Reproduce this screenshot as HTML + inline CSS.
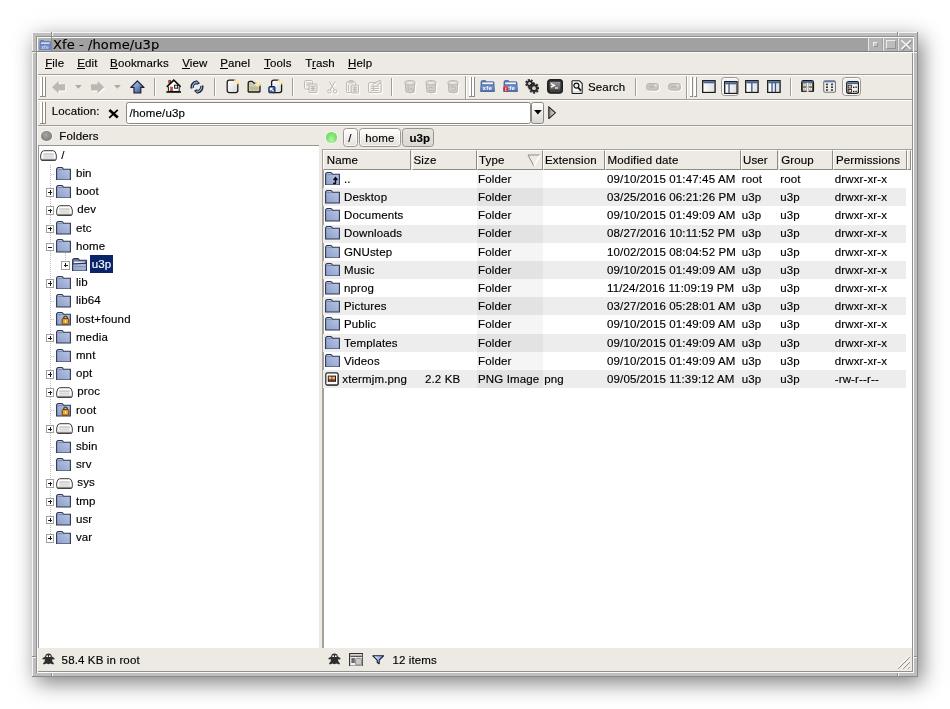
<!DOCTYPE html>
<html><head><meta charset="utf-8"><title>Xfe - /home/u3p</title>
<style>
html,body{margin:0;padding:0;background:#fff;}
body{width:950px;height:709px;position:relative;overflow:hidden;font-family:"Liberation Sans",sans-serif;font-size:11.5px;letter-spacing:.14px;color:#000;-webkit-text-stroke:.15px;}
.a{position:absolute;}
.txt{white-space:pre;line-height:14.34px;height:14.34px;}
u{text-decoration:underline;text-decoration-thickness:1px;text-underline-offset:1.2px;}
.vs{width:1px;background:#a19d96;border-right:1px solid #fff;}
.grip{width:2px;height:19px;background:#fff;border-right:.8px solid #8e8a84;border-bottom:.8px solid #8e8a84;}
.hd{box-sizing:border-box;border-top:1px solid #fff;border-left:1px solid #fff;border-right:1px solid #8e8a84;border-bottom:1px solid #8e8a84;background:#edeae4;}
.pb{top:128.3px;height:19px;box-sizing:border-box;border:1px solid #9b9892;border-radius:3.5px;background:linear-gradient(#ffffff,#f4f2ee 45%,#e3e0da);box-shadow:inset 0 0 0 1px rgba(255,255,255,.7);}
#root{left:0;top:0;width:950px;height:709px;will-change:transform;}
</style></head><body><div id="root" class="a">

<div class="a" style="left:32.00px;top:32.00px;width:886.00px;height:645.00px;background:#8a8a8a;box-shadow:4px 6px 20px 0 rgba(0,0,0,.5)"></div>
<div class="a" style="left:32.00px;top:32.00px;width:885.00px;height:644.00px;background:#f4f4f4;"></div>
<div class="a" style="left:33.00px;top:33.00px;width:884.00px;height:643.00px;background:#bebebe;"></div>
<div class="a" style="left:36.00px;top:36.00px;width:878.00px;height:637.00px;background:#909090;"></div>
<div class="a" style="left:37.00px;top:37.00px;width:877.00px;height:636.00px;background:#fafafa;"></div>
<div class="a" style="left:38.00px;top:38.00px;width:875.00px;height:634.00px;background:#909090;"></div>
<div class="a" style="left:38.00px;top:38.00px;width:874.00px;height:633.00px;background:#a1a1a1;"></div>
<div class="a" style="left:51.00px;top:32.00px;width:1.00px;height:4.00px;background:#8c8c8c;"></div>
<div class="a" style="left:52.00px;top:33.00px;width:1.00px;height:3.00px;background:#f2f2f2;"></div>
<div class="a" style="left:51.00px;top:673.00px;width:1.00px;height:4.00px;background:#8c8c8c;"></div>
<div class="a" style="left:52.00px;top:673.00px;width:1.00px;height:3.00px;background:#f2f2f2;"></div>
<div class="a" style="left:897.00px;top:32.00px;width:1.00px;height:4.00px;background:#8c8c8c;"></div>
<div class="a" style="left:898.00px;top:33.00px;width:1.00px;height:3.00px;background:#f2f2f2;"></div>
<div class="a" style="left:897.00px;top:673.00px;width:1.00px;height:4.00px;background:#8c8c8c;"></div>
<div class="a" style="left:898.00px;top:673.00px;width:1.00px;height:3.00px;background:#f2f2f2;"></div>
<div class="a" style="left:32.00px;top:51.00px;width:4.00px;height:1.00px;background:#8c8c8c;"></div>
<div class="a" style="left:33.00px;top:52.00px;width:3.00px;height:1.00px;background:#f2f2f2;"></div>
<div class="a" style="left:914.00px;top:51.00px;width:4.00px;height:1.00px;background:#8c8c8c;"></div>
<div class="a" style="left:914.00px;top:52.00px;width:3.00px;height:1.00px;background:#f2f2f2;"></div>
<div class="a" style="left:32.00px;top:656.00px;width:4.00px;height:1.00px;background:#8c8c8c;"></div>
<div class="a" style="left:33.00px;top:657.00px;width:3.00px;height:1.00px;background:#f2f2f2;"></div>
<div class="a" style="left:914.00px;top:656.00px;width:4.00px;height:1.00px;background:#8c8c8c;"></div>
<div class="a" style="left:914.00px;top:657.00px;width:3.00px;height:1.00px;background:#f2f2f2;"></div>
<div class="a" style="left:38.00px;top:38.00px;width:13.00px;height:13.00px;background:#b2b2b2;"></div>
<div class="a" style="left:51.00px;top:36.00px;width:1.00px;height:15.00px;background:#8c8c8c;"></div>
<svg class="a" style="left:38.8px;top:39.8px" width="13" height="10.4" viewBox="0 0 13 10.4"><path d="M1,9.6 V1.5 Q1,.5 2,.5 H4.4 L5.4,1.5 H10.6 Q11.4,1.5 11.4,2.4 V9.6 Z" fill="#6483c0" stroke="#5776b6" stroke-width=".8"/><rect x="2" y="2.4" width="8.6" height="1.5" fill="#dfe6f5"/><path d="M.4,9.8 L.9,4.6 H12 L12.5,9.8 Z" fill="#6a88c4"/><text x="2.2" y="8.8" font-family="Liberation Sans,sans-serif" font-size="5" font-weight="bold" fill="#cfdaf2">xfe</text></svg>
<div class="a" style="left:53px;top:36.6px;font-family:'DejaVu Sans',sans-serif;font-size:13px;line-height:16px;white-space:pre;letter-spacing:.1px">Xfe - /home/u3p</div>
<div class="a" style="left:867.60px;top:38.00px;width:14.60px;height:13.00px;background:#b4b4b4;box-sizing:border-box;border-left:1px solid #e4e4e4"></div>
<div class="a" style="left:882.90px;top:38.00px;width:14.60px;height:13.00px;background:#b4b4b4;box-sizing:border-box;border-left:1px solid #e4e4e4"></div>
<div class="a" style="left:898.20px;top:38.00px;width:14.60px;height:13.00px;background:#b4b4b4;box-sizing:border-box;border-left:1px solid #e4e4e4"></div>
<div class="a" style="left:872.8px;top:42.4px;width:4.8px;height:4.8px;box-sizing:border-box;border:1px solid #f0f0f0;border-right-color:#949494;border-bottom-color:#949494;background:#c6c6c6"></div>
<div class="a" style="left:885.8px;top:39.6px;width:10.2px;height:9.8px;box-sizing:border-box;border:1.3px solid #ececec;border-right-color:#929292;border-bottom-color:#929292;background:#bcbcbc"></div>
<svg class="a" style="left:899.6px;top:38.6px" width="13" height="12.4" viewBox="0 0 13 12.4"><path d="M2.2,2.2 L11.6,11 M11.6,2.2 L2.2,11" stroke="#8e8e8e" stroke-width="2"/><path d="M1.4,1.4 L10.8,10.2 M10.8,1.4 L1.4,10.2" stroke="#f2f2f2" stroke-width="1.7"/></svg>
<div class="a" style="left:37.00px;top:51.00px;width:876.00px;height:1.00px;background:#808080;"></div>
<div class="a" style="left:37.00px;top:52.00px;width:876.00px;height:1.00px;background:#fcfcfc;"></div>
<div class="a" style="left:38.00px;top:53.00px;width:874.00px;height:618.00px;background:#edeae4;"></div>
<div class="a txt" style="left:45.20px;top:56.00px;">File</div>
<div class="a" style="left:45.20px;top:68.00px;width:7.00px;height:1.00px;background:#000;"></div>
<div class="a txt" style="left:77.20px;top:56.00px;">Edit</div>
<div class="a" style="left:77.20px;top:68.00px;width:7.70px;height:1.00px;background:#000;"></div>
<div class="a txt" style="left:110.10px;top:56.00px;">Bookmarks</div>
<div class="a" style="left:110.10px;top:68.00px;width:7.70px;height:1.00px;background:#000;"></div>
<div class="a txt" style="left:182.20px;top:56.00px;">View</div>
<div class="a" style="left:182.20px;top:68.00px;width:7.50px;height:1.00px;background:#000;"></div>
<div class="a txt" style="left:220.20px;top:56.00px;">Panel</div>
<div class="a" style="left:220.20px;top:68.00px;width:7.70px;height:1.00px;background:#000;"></div>
<div class="a txt" style="left:264.10px;top:56.00px;">Tools</div>
<div class="a" style="left:264.10px;top:68.00px;width:5.80px;height:1.00px;background:#000;"></div>
<div class="a txt" style="left:305.20px;top:56.00px;">Trash</div>
<div class="a" style="left:311.90px;top:68.00px;width:3.90px;height:1.00px;background:#000;"></div>
<div class="a txt" style="left:348.10px;top:56.00px;">Help</div>
<div class="a" style="left:348.10px;top:68.00px;width:8.30px;height:1.00px;background:#000;"></div>
<div class="a" style="left:38.00px;top:74.00px;width:874.00px;height:1.00px;background:#a19d96;"></div>
<div class="a" style="left:38.00px;top:75.00px;width:874.00px;height:1.00px;background:#fff;"></div>
<div class="a" style="left:38.00px;top:99.00px;width:874.00px;height:1.00px;background:#a19d96;"></div>
<div class="a" style="left:38.00px;top:100.00px;width:874.00px;height:1.00px;background:#fff;"></div>
<div class="a" style="left:38.00px;top:125.00px;width:874.00px;height:1.00px;background:#a19d96;"></div>
<div class="a" style="left:38.00px;top:126.00px;width:874.00px;height:1.00px;background:#f6f5f2;"></div>
<div class="a" style="left:465.00px;top:76.00px;width:1.00px;height:23.00px;background:#a19d96;"></div>
<div class="a" style="left:466.00px;top:76.00px;width:1.00px;height:23.00px;background:#fff;"></div>
<div class="a" style="left:686.00px;top:76.00px;width:1.00px;height:23.00px;background:#a19d96;"></div>
<div class="a" style="left:687.00px;top:76.00px;width:1.00px;height:23.00px;background:#fff;"></div>
<div class="a grip" style="left:40.2px;top:77px"></div>
<div class="a grip" style="left:43.2px;top:77px"></div>
<div class="a grip" style="left:469.0px;top:77px"></div>
<div class="a grip" style="left:472.3px;top:77px"></div>
<div class="a grip" style="left:690.3px;top:77px"></div>
<div class="a grip" style="left:693.8px;top:77px"></div>
<div class="a grip" style="left:40.2px;top:101.8px;height:21.2px"></div>
<div class="a grip" style="left:43.2px;top:101.8px;height:21.2px"></div>
<div class="a vs" style="left:154.0px;top:78.2px;height:18px"></div>
<div class="a vs" style="left:213.8px;top:78.2px;height:18px"></div>
<div class="a vs" style="left:292.0px;top:78.2px;height:18px"></div>
<div class="a vs" style="left:391.0px;top:78.2px;height:18px"></div>
<div class="a vs" style="left:635.0px;top:78.2px;height:18px"></div>
<div class="a vs" style="left:790.0px;top:78.2px;height:18px"></div>
<svg class="a" style="left:52.00px;top:81.00px" width="14.9" height="14.1" viewBox="0 0 14.9 14.1"><path d="M0,6.3 L6.6,0 L6.6,3.2 L13.2,3.2 L13.2,9.4 L6.6,9.4 L6.6,12.6 Z" transform="translate(1,1)" fill="#fff"/><path d="M0,6.3 L6.6,0 L6.6,3.2 L13.2,3.2 L13.2,9.4 L6.6,9.4 L6.6,12.6 Z" fill="#bcb8b1"/></svg>
<svg class="a" style="left:90.80px;top:81.00px" width="14.9" height="14.1" viewBox="0 0 14.9 14.1"><path d="M13.2,6.3 L6.6,0 L6.6,3.2 L0,3.2 L0,9.4 L6.6,9.4 L6.6,12.6 Z" transform="translate(1,1)" fill="#fff"/><path d="M13.2,6.3 L6.6,0 L6.6,3.2 L0,3.2 L0,9.4 L6.6,9.4 L6.6,12.6 Z" fill="#bcb8b1"/></svg>
<svg class="a" style="left:74.70px;top:85.30px" width="7" height="4" viewBox="0 0 7 4"><path d="M0,0 H6.8 L3.4,3.8 Z" fill="#aeaaa3"/></svg>
<svg class="a" style="left:113.60px;top:85.30px" width="7" height="4" viewBox="0 0 7 4"><path d="M0,0 H6.8 L3.4,3.8 Z" fill="#aeaaa3"/></svg>
<svg class="a" style="left:129.50px;top:79.50px" width="15" height="14" viewBox="0 0 15 14"><defs><linearGradient id="ug" x1="0" y1="0" x2="1" y2="1"><stop offset="0" stop-color="#b9cbec"/><stop offset=".45" stop-color="#7e98c8"/><stop offset="1" stop-color="#2f4674"/></linearGradient></defs><path d="M7.4,0.8 L14,7.4 L10.8,7.4 L10.8,13 L4,13 L4,7.4 L0.8,7.4 Z" fill="url(#ug)" stroke="#18223c" stroke-width="1.2" stroke-linejoin="round"/></svg>
<svg class="a" style="left:165.60px;top:79.40px" width="15.6" height="14" viewBox="0 0 15.6 14"><rect x="2.8" y="1.2" width="2" height="3" fill="#d8402c" stroke="#3a1410" stroke-width=".5"/><path d="M2.4,7 V12.4 H13.2 V7" fill="#fff" stroke="#111" stroke-width="1"/><path d="M0.8,7.8 L7.8,1.2 L14.8,7.8" fill="#fff" stroke="#0a0a0a" stroke-width="1.6" stroke-linejoin="miter"/><path d="M3.2,7.4 L7.8,3.2 L12.4,7.4 Z" fill="#fff"/><rect x="4.6" y="8" width="1.9" height="4" fill="#e2402e" stroke="#5a1a12" stroke-width=".4"/><rect x="8.6" y="6.2" width="3" height="3" fill="#f4f4f4" stroke="#1a1a1a" stroke-width="1"/><path d="M0.4,13 H15.2" stroke="#0a0a0a" stroke-width="1.6"/></svg>
<svg class="a" style="left:189.80px;top:80.00px" width="14" height="14" viewBox="0 0 14 14"><path d="M2.36,8.24 A4.8,4.8 0 0 1 6.58,2.22" stroke="#141c34" stroke-width="3.4" fill="none"/><path d="M6.3,-0.2 L10,3.2 L6.7,5 Z" fill="#141c34"/><path d="M2.5,7.9 A4.7,4.7 0 0 1 6.9,2.3" stroke="#8ca6d6" stroke-width="1.4" fill="none"/><path d="M6.9,1.3 L8.7,3.1 L6.9,3.7 Z" fill="#6a86bc"/><g transform="rotate(180 7 7)"><path d="M2.36,8.24 A4.8,4.8 0 0 1 6.58,2.22" stroke="#141c34" stroke-width="3.4" fill="none"/><path d="M6.3,-0.2 L10,3.2 L6.7,5 Z" fill="#141c34"/><path d="M2.5,7.9 A4.7,4.7 0 0 1 6.9,2.3" stroke="#8ca6d6" stroke-width="1.4" fill="none"/><path d="M6.9,1.3 L8.7,3.1 L6.9,3.7 Z" fill="#6a86bc"/></g></svg>
<svg class="a" style="left:226.40px;top:79.20px" width="14" height="14.6" viewBox="0 0 14 14.6"><defs><linearGradient id="dg1" x1="0" y1="0" x2="1" y2="1"><stop offset="0" stop-color="#fff"/><stop offset="1" stop-color="#d8d8d8"/></linearGradient></defs><rect x="1.2" y="1.2" width="10.6" height="12.4" rx="2" fill="url(#dg1)" stroke="#1a1a1a" stroke-width="1.3"/><circle cx="10.8" cy="2.6" r="3" fill="#fff6d8" opacity=".75"/><circle cx="10.8" cy="2.6" r="1.9" fill="#f8d888"/><circle cx="10.8" cy="2.6" r="1" fill="#fffdf2"/></svg>
<svg class="a" style="left:247.20px;top:80.00px" width="15" height="13" viewBox="0 0 15 13"><path d="M1.2,11.6 V3.4 Q1.2,1.4 3,1.4 H5.2 L7,3.2 H11.6 Q13,3.2 13,4.8 V11.6 Q13,12 12.4,12 H1.8 Q1.2,12 1.2,11.6 Z" fill="#cfcdb0" stroke="#1a1a1a" stroke-width="1.3"/><rect x="3" y="6.6" width="8.4" height="3.6" fill="#bdbb98"/><circle cx="11.2" cy="3.4" r="3" fill="#fff6d8" opacity=".75"/><circle cx="11.2" cy="3.4" r="1.9" fill="#f8d888"/><circle cx="11.2" cy="3.4" r="1" fill="#fffdf2"/></svg>
<svg class="a" style="left:268.20px;top:79.20px" width="15" height="14.6" viewBox="0 0 15 14.6"><rect x="3.6" y="1.2" width="10" height="12.4" rx="2" fill="url(#dg1)" stroke="#1a1a1a" stroke-width="1.3"/><circle cx="12.6" cy="2.6" r="3" fill="#fff6d8" opacity=".75"/><circle cx="12.6" cy="2.6" r="1.9" fill="#f8d888"/><circle cx="12.6" cy="2.6" r="1" fill="#fffdf2"/><rect x="0.8" y="7.6" width="6.2" height="6.2" rx=".8" fill="#3e64a8" stroke="#122040" stroke-width="1"/><path d="M5.6,12.4 L2.6,9.4 M2.4,11.6 V9.2 H4.8" stroke="#fff" stroke-width="1.1" fill="none"/></svg>
<svg class="a" style="left:304.00px;top:80.30px" width="15.1" height="14.7" viewBox="0 0 15.1 14.7"><g transform="translate(1,1)" fill="none" stroke="#fff" stroke-width="1.1"><rect x=".6" y=".6" width="7.8" height="8.6" rx="1"/><path d="M2.2,3 H6.8 M2.2,5 H6.8"/><rect x="5" y="4" width="8" height="8.6" rx="1" fill="#edeae4"/><path d="M6.6,6.4 H11.4 M6.6,8.4 H11.4 M6.6,10.4 H11.4 M9,6.4 V10.4"/></g><g fill="none" stroke="#bab6af" stroke-width="1"><rect x=".6" y=".6" width="7.8" height="8.6" rx="1"/><path d="M2.2,3 H6.8 M2.2,5 H6.8"/><rect x="5" y="4" width="8" height="8.6" rx="1" fill="#edeae4"/><path d="M6.6,6.4 H11.4 M6.6,8.4 H11.4 M6.6,10.4 H11.4 M9,6.4 V10.4"/></g></svg>
<svg class="a" style="left:326.60px;top:80.60px" width="12.1" height="14.1" viewBox="0 0 12.1 14.1"><g transform="translate(1,1)" fill="none" stroke="#fff" stroke-width="1.1"><path d="M2.4,0.6 L7.4,9 M8.2,0.6 L3.2,9"/><circle cx="2.4" cy="10.4" r="1.7"/><circle cx="8.2" cy="10.4" r="1.7"/></g><g fill="none" stroke="#bab6af" stroke-width="1"><path d="M2.4,0.6 L7.4,9 M8.2,0.6 L3.2,9"/><circle cx="2.4" cy="10.4" r="1.7"/><circle cx="8.2" cy="10.4" r="1.7"/></g></svg>
<svg class="a" style="left:346.40px;top:80.00px" width="14.9" height="14.9" viewBox="0 0 14.9 14.9"><g transform="translate(1,1)" fill="none" stroke="#fff" stroke-width="1.1"><rect x=".6" y="1.8" width="9" height="10.8" rx="1.2"/><rect x="3" y=".6" width="4.4" height="2.4" rx=".8"/><rect x="5.2" y="5" width="7.4" height="8" rx=".8" fill="#edeae4"/><path d="M6.8,7.2 H11 M6.8,9.2 H11 M6.8,11.2 H11 M8.8,7.2 V11.2 M2.6,4.6 V11"/></g><g fill="none" stroke="#bab6af" stroke-width="1"><rect x=".6" y="1.8" width="9" height="10.8" rx="1.2"/><rect x="3" y=".6" width="4.4" height="2.4" rx=".8"/><rect x="5.2" y="5" width="7.4" height="8" rx=".8" fill="#edeae4"/><path d="M6.8,7.2 H11 M6.8,9.2 H11 M6.8,11.2 H11 M8.8,7.2 V11.2 M2.6,4.6 V11"/></g></svg>
<svg class="a" style="left:368.00px;top:80.20px" width="15.9" height="14.7" viewBox="0 0 15.9 14.7"><g transform="translate(1,1)" fill="none" stroke="#fff" stroke-width="1.1"><rect x=".6" y="2.6" width="12.6" height="10" rx="1.4"/><path d="M3,6.2 H11 M3,8.4 H11 M3,10.6 H11 M5.6,6.2 V10.6"/><path d="M4.4,4.6 L11,0.8 L13,0.8 L13,2.6 L9.4,4.8" fill="#edeae4"/></g><g fill="none" stroke="#bab6af" stroke-width="1"><rect x=".6" y="2.6" width="12.6" height="10" rx="1.4"/><path d="M3,6.2 H11 M3,8.4 H11 M3,10.6 H11 M5.6,6.2 V10.6"/><path d="M4.4,4.6 L11,0.8 L13,0.8 L13,2.6 L9.4,4.8" fill="#edeae4"/></g></svg>
<svg class="a" style="left:404.00px;top:79.80px" width="13.5" height="14.7" viewBox="0 0 13.5 14.7"><g transform="translate(1,1)" fill="none" stroke="#fff" stroke-width="1.1"><path d="M1.2,3.4 L2,12 Q6,13.8 10,12 L10.8,3.4 Z" fill="#d3d0c9"/><ellipse cx="6" cy="2.8" rx="5.2" ry="2.2" fill="#dedbd5"/><ellipse cx="6" cy="2.8" rx="2.6" ry=".9" fill="#edeae4" stroke="none"/><path d="M4.2,6.4 V11 M6.2,8.8 H8.2 V11"/></g><g fill="none" stroke="#bab6af" stroke-width="1"><path d="M1.2,3.4 L2,12 Q6,13.8 10,12 L10.8,3.4 Z" fill="#d3d0c9"/><ellipse cx="6" cy="2.8" rx="5.2" ry="2.2" fill="#dedbd5"/><ellipse cx="6" cy="2.8" rx="2.6" ry=".9" fill="#edeae4" stroke="none"/><path d="M4.2,6.4 V11 M6.2,8.8 H8.2 V11"/></g></svg>
<svg class="a" style="left:425.20px;top:79.80px" width="13.5" height="14.7" viewBox="0 0 13.5 14.7"><g transform="translate(1,1)" fill="none" stroke="#fff" stroke-width="1.1"><path d="M1.2,3.4 L2,12 Q6,13.8 10,12 L10.8,3.4 Z" fill="#d3d0c9"/><ellipse cx="6" cy="2.8" rx="5.2" ry="2.2" fill="#dedbd5"/><ellipse cx="6" cy="2.8" rx="2.6" ry=".9" fill="#edeae4" stroke="none"/><path d="M3.6,8.2 Q6,6.6 8.4,8.2 M3.8,10.6 H8.2 M6,0.2 V1.6"/></g><g fill="none" stroke="#bab6af" stroke-width="1"><path d="M1.2,3.4 L2,12 Q6,13.8 10,12 L10.8,3.4 Z" fill="#d3d0c9"/><ellipse cx="6" cy="2.8" rx="5.2" ry="2.2" fill="#dedbd5"/><ellipse cx="6" cy="2.8" rx="2.6" ry=".9" fill="#edeae4" stroke="none"/><path d="M3.6,8.2 Q6,6.6 8.4,8.2 M3.8,10.6 H8.2 M6,0.2 V1.6"/></g></svg>
<svg class="a" style="left:447.00px;top:79.80px" width="13.5" height="14.7" viewBox="0 0 13.5 14.7"><g transform="translate(1,1)" fill="none" stroke="#fff" stroke-width="1.1"><path d="M1.2,3.4 L2,12 Q6,13.8 10,12 L10.8,3.4 Z" fill="#d3d0c9"/><ellipse cx="6" cy="2.8" rx="5.2" ry="2.2" fill="#dedbd5"/><ellipse cx="6" cy="2.8" rx="2.6" ry=".9" fill="#edeae4" stroke="none"/><path d="M3.4,7 H8 Q9.4,8.6 8,10.4 H4 M6,0.2 V1.6"/></g><g fill="none" stroke="#bab6af" stroke-width="1"><path d="M1.2,3.4 L2,12 Q6,13.8 10,12 L10.8,3.4 Z" fill="#d3d0c9"/><ellipse cx="6" cy="2.8" rx="5.2" ry="2.2" fill="#dedbd5"/><ellipse cx="6" cy="2.8" rx="2.6" ry=".9" fill="#edeae4" stroke="none"/><path d="M3.4,7 H8 Q9.4,8.6 8,10.4 H4 M6,0.2 V1.6"/></g></svg>
<svg class="a" style="left:480.20px;top:79.90px" width="15" height="12.2" viewBox="0 0 15 12.2"><defs><linearGradient id="xg" x1="0" y1="0" x2="0" y2="1"><stop offset="0" stop-color="#7f9bd0"/><stop offset="1" stop-color="#4c6caa"/></linearGradient></defs><path d="M1,11.4 V2 Q1,0.6 2.4,0.6 H5.4 L6.6,1.8 H13 Q14,1.8 14,2.8 V11.4 Z" fill="#5573ae" stroke="#4a66a0" stroke-width=".8"/><rect x="2.2" y="2.4" width="10.8" height="1.9" fill="#f2f5fc"/><path d="M0.4,11.6 L1.2,5.2 H13.8 L14.6,11.6 Z" fill="url(#xg)" stroke="#4866a2" stroke-width=".6"/><text x="2.6" y="10.4" font-family="Liberation Sans,sans-serif" font-size="6.2" font-weight="bold" fill="#fff">xfe</text></svg>
<svg class="a" style="left:502.60px;top:79.90px" width="15" height="12.2" viewBox="0 0 15 12.2"><defs><linearGradient id="xg" x1="0" y1="0" x2="0" y2="1"><stop offset="0" stop-color="#7f9bd0"/><stop offset="1" stop-color="#4c6caa"/></linearGradient></defs><path d="M1,11.4 V2 Q1,0.6 2.4,0.6 H5.4 L6.6,1.8 H13 Q14,1.8 14,2.8 V11.4 Z" fill="#5573ae" stroke="#4a66a0" stroke-width=".8"/><rect x="2.2" y="2.4" width="10.8" height="1.9" fill="#f2f5fc"/><path d="M0.4,11.6 L1.2,5.2 H13.8 L14.6,11.6 Z" fill="url(#xg)" stroke="#4866a2" stroke-width=".6"/><text x="2.6" y="10.4" font-family="Liberation Sans,sans-serif" font-size="6.2" font-weight="bold" fill="#fff">xfe</text><circle cx="2.8" cy="9" r="2.5" fill="#ee1c1c"/><rect x="2.3" y="7.4" width="1" height="2.2" fill="#fff"/><rect x="2.3" y="10" width="1" height=".9" fill="#fff"/></svg>
<svg class="a" style="left:524.60px;top:79.40px" width="14.6" height="14.6" viewBox="0 0 14.6 14.6"><polygon points="8.72,3.57 8.71,5.29 7.45,5.12 6.92,6.21 7.82,7.10 6.47,8.16 5.81,7.08 4.63,7.34 4.50,8.60 2.82,8.20 3.26,7.02 2.32,6.26 1.25,6.94 0.52,5.38 1.72,4.98 1.73,3.78 0.53,3.37 1.29,1.82 2.35,2.51 3.29,1.77 2.87,0.57 4.55,0.20 4.67,1.46 5.85,1.74 6.51,0.66 7.85,1.74 6.94,2.62 7.46,3.71" fill="#2a2a2a" stroke="#111" stroke-width=".5"/><circle cx="4.6" cy="4.4" r="1.512" fill="#d6d3cd"/><polygon points="14.10,8.17 14.13,10.04 12.57,9.90 12.10,11.11 13.33,12.07 12.04,13.42 11.03,12.22 9.83,12.74 10.03,14.30 8.16,14.33 8.30,12.77 7.09,12.30 6.13,13.53 4.78,12.24 5.98,11.23 5.46,10.03 3.90,10.23 3.87,8.36 5.43,8.50 5.90,7.29 4.67,6.33 5.96,4.98 6.97,6.18 8.17,5.66 7.97,4.10 9.84,4.07 9.70,5.63 10.91,6.10 11.87,4.87 13.22,6.16 12.02,7.17 12.54,8.37" fill="#2a2a2a" stroke="#111" stroke-width=".5"/><circle cx="9" cy="9.2" r="1.872" fill="#d6d3cd"/></svg>
<svg class="a" style="left:546.60px;top:79.40px" width="16.2" height="14.8" viewBox="0 0 16.2 14.8"><defs><linearGradient id="tg" x1="0" y1="0" x2="0" y2="1"><stop offset="0" stop-color="#9a9a9a"/><stop offset="1" stop-color="#5a5a5a"/></linearGradient></defs><rect x=".6" y=".6" width="15" height="13.6" rx="2.6" fill="#2c2c2c" stroke="#161616" stroke-width="1"/><rect x="2.8" y="2.8" width="10.6" height="8" fill="url(#tg)"/><path d="M4,4.6 L7.4,6.4 L4,8.2" fill="none" stroke="#fff" stroke-width="1.3"/><path d="M8,9 H11" stroke="#fff" stroke-width="1.2"/><rect x="2.8" y="11.4" width="10.6" height="1.4" fill="#4a4a4a"/></svg>
<svg class="a" style="left:571.40px;top:79.80px" width="12" height="14.2" viewBox="0 0 12 14.2"><path d="M1,1.4 Q1,.7 1.7,.7 H8.4 L11.2,3.6 V12.8 Q11.2,13.5 10.5,13.5 H1.7 Q1,13.5 1,12.8 Z" fill="#fafafa" stroke="#1c1c1c" stroke-width="1.1"/><path d="M2,11 Q5,12.6 10.2,10.4 V12.6 H2 Z" fill="#c8c8c8"/><circle cx="5.4" cy="5.6" r="2.5" fill="#e8eef8" stroke="#111" stroke-width="1.2"/><path d="M7.2,7.6 L10,10.6" stroke="#111" stroke-width="1.8"/></svg>
<div class="a txt" style="left:588.00px;top:80.20px;">Search</div>
<svg class="a" style="left:646.40px;top:82.80px" width="14.5" height="9.1" viewBox="0 0 14.5 9.1"><g transform="translate(1,1)" fill="none" stroke="#fff" stroke-width="1.1"><rect x=".6" y=".6" width="11.8" height="6.4" rx="2.2" fill="#c9c6bf"/><path d="M3,3.8 H8" stroke-width="1.6"/><rect x="8.6" y="1.6" width="2" height="1.6" fill="#edeae4" stroke="none"/></g><g fill="none" stroke="#bab6af" stroke-width="1"><rect x=".6" y=".6" width="11.8" height="6.4" rx="2.2" fill="#c9c6bf"/><path d="M3,3.8 H8" stroke-width="1.6"/><rect x="8.6" y="1.6" width="2" height="1.6" fill="#edeae4" stroke="none"/></g></svg>
<svg class="a" style="left:668.20px;top:82.80px" width="14.5" height="9.1" viewBox="0 0 14.5 9.1"><g transform="translate(1,1)" fill="none" stroke="#fff" stroke-width="1.1"><rect x=".6" y=".6" width="11.8" height="6.4" rx="2.2" fill="#c9c6bf"/><path d="M3,3.8 H8" stroke-width="1.6"/><rect x="8.6" y="1.6" width="2" height="1.6" fill="#edeae4" stroke="none"/></g><g fill="none" stroke="#bab6af" stroke-width="1"><rect x=".6" y=".6" width="11.8" height="6.4" rx="2.2" fill="#c9c6bf"/><path d="M3,3.8 H8" stroke-width="1.6"/><rect x="8.6" y="1.6" width="2" height="1.6" fill="#edeae4" stroke="none"/></g></svg>
<div class="a" style="left:721.0px;top:77.2px;width:18.4px;height:18.6px;box-sizing:border-box;border:1px solid #9d9993;border-radius:3.5px;background:#f3f1ed;box-shadow:inset 0 0 0 1px #fbfaf8"></div>
<div class="a" style="left:842.3px;top:77.2px;width:18.4px;height:18.6px;box-sizing:border-box;border:1px solid #9d9993;border-radius:3.5px;background:#f3f1ed;box-shadow:inset 0 0 0 1px #fbfaf8"></div>
<svg class="a" style="left:701.80px;top:80.00px" width="13.8" height="13.2" viewBox="0 0 13.8 13.2"><defs><linearGradient id="pg" x1="0" y1="0" x2="1" y2="0"><stop offset="0" stop-color="#fff"/><stop offset="1" stop-color="#dedede"/></linearGradient></defs><rect x=".7" y=".7" width="12.4" height="11.8" fill="url(#pg)" stroke="#181818" stroke-width="1.3"/><rect x="1.3" y="1.3" width="11.2" height="2" fill="#45659a"/></svg>
<svg class="a" style="left:724.00px;top:80.80px" width="13.8" height="13.2" viewBox="0 0 13.8 13.2"><defs><linearGradient id="pg" x1="0" y1="0" x2="1" y2="0"><stop offset="0" stop-color="#fff"/><stop offset="1" stop-color="#dedede"/></linearGradient></defs><rect x=".7" y=".7" width="12.4" height="11.8" fill="url(#pg)" stroke="#181818" stroke-width="1.3"/><rect x="1.3" y="1.3" width="11.2" height="2" fill="#45659a"/><rect x="4.4" y="3" width="1.3" height="9" fill="#35558c"/></svg>
<svg class="a" style="left:745.00px;top:80.00px" width="13.8" height="13.2" viewBox="0 0 13.8 13.2"><defs><linearGradient id="pg" x1="0" y1="0" x2="1" y2="0"><stop offset="0" stop-color="#fff"/><stop offset="1" stop-color="#dedede"/></linearGradient></defs><rect x=".7" y=".7" width="12.4" height="11.8" fill="url(#pg)" stroke="#181818" stroke-width="1.3"/><rect x="1.3" y="1.3" width="11.2" height="2" fill="#45659a"/><rect x="6.2" y="3" width="1.3" height="9" fill="#35558c"/></svg>
<svg class="a" style="left:766.80px;top:80.00px" width="13.8" height="13.2" viewBox="0 0 13.8 13.2"><defs><linearGradient id="pg" x1="0" y1="0" x2="1" y2="0"><stop offset="0" stop-color="#fff"/><stop offset="1" stop-color="#dedede"/></linearGradient></defs><rect x=".7" y=".7" width="12.4" height="11.8" fill="url(#pg)" stroke="#181818" stroke-width="1.3"/><rect x="1.3" y="1.3" width="11.2" height="2" fill="#45659a"/><rect x="4.4" y="3" width="1.3" height="9" fill="#35558c"/><rect x="7.8" y="3" width="1.3" height="9" fill="#35558c"/></svg>
<svg class="a" style="left:801.40px;top:79.60px" width="13.2" height="12.8" viewBox="0 0 13.2 12.8"><rect x=".7" y=".7" width="11.8" height="11.4" rx="1.8" fill="#5a5a5a" stroke="#181818" stroke-width="1.2"/><rect x="1.4" y="1.2" width="10.4" height="1.6" fill="#5070a6"/><rect x="5.6" y="2.8" width="2" height="9" fill="#f2f2f2"/><rect x="2.2" y="3.4" width="3" height="2.6" fill="#e8e8e8"/><rect x="8" y="3.4" width="3" height="2.6" fill="#e8e8e8"/><rect x="2.2" y="8" width="3" height="2.6" fill="#e8e8e8"/><rect x="8" y="8" width="3" height="2.6" fill="#e8e8e8"/><rect x="3" y="4.2" width="1.4" height="1.2" fill="#e0a050"/><rect x="8.8" y="4.2" width="1.4" height="1.2" fill="#e0a050"/><rect x="3" y="8.8" width="1.4" height="1.2" fill="#e0a050"/><rect x="8.8" y="8.8" width="1.4" height="1.2" fill="#e0a050"/><path d="M2,7 H11" stroke="#bbb" stroke-width=".8"/></svg>
<svg class="a" style="left:823.20px;top:79.80px" width="13.2" height="13" viewBox="0 0 13.2 13"><rect x=".7" y=".7" width="11.8" height="11.6" rx="1.6" fill="#ececec" stroke="#7a7a7a" stroke-width="1.1"/><rect x="1.2" y=".8" width="10.8" height="1.5" fill="#5a7ab0"/><rect x="3.2" y="3.6" width="1.6" height="1.6" fill="#0a0a0a"/><rect x="3.2" y="6.4" width="1.6" height="1.6" fill="#0a0a0a"/><rect x="3.2" y="9.2" width="1.6" height="1.6" fill="#0a0a0a"/><rect x="8.2" y="3.6" width="1.6" height="1.6" fill="#0a0a0a"/><rect x="8.2" y="6.4" width="1.6" height="1.6" fill="#0a0a0a"/><rect x="8.2" y="9.2" width="1.6" height="1.6" fill="#0a0a0a"/></svg>
<svg class="a" style="left:845.60px;top:80.60px" width="13.2" height="13" viewBox="0 0 13.2 13"><rect x=".7" y=".7" width="11.8" height="11.6" rx="1.8" fill="#f2f2f2" stroke="#202020" stroke-width="1.3"/><rect x="1.3" y="1.3" width="10.6" height="1.8" fill="#45659a"/><rect x="2.2" y="4.2" width="3.2" height="2.8" fill="#fff" stroke="#222" stroke-width=".9"/><rect x="2.2" y="8.4" width="3.2" height="2.8" fill="#fff" stroke="#222" stroke-width=".9"/><rect x="3" y="5.2" width="1.4" height="1" fill="#e0a050"/><rect x="3" y="9.4" width="1.4" height="1" fill="#e0a050"/><rect x="7" y="5.6" width="1.4" height="1.3" fill="#111"/><rect x="9.4" y="5.6" width="1.4" height="1.3" fill="#111"/><rect x="7" y="9.8" width="1.4" height="1.3" fill="#111"/><rect x="9.4" y="9.8" width="1.4" height="1.3" fill="#111"/></svg>
<div class="a txt" style="left:51.70px;top:104.20px;">Location:</div>
<svg class="a" style="left:108.00px;top:108.80px" width="11.4" height="9.8" viewBox="0 0 11.4 9.8"><path d="M1.4,1 L9.8,8.6" stroke="#000" stroke-width="2.7"/><path d="M9.8,.8 L1.2,8.8" stroke="#000" stroke-width="1.7"/></svg>
<div class="a" style="left:125.6px;top:102.4px;width:405px;height:21.6px;box-sizing:border-box;border:1px solid #8b8882;border-radius:2.5px;background:#fff;box-shadow:0 1px 0 #fff"></div>
<div class="a txt" style="left:129.40px;top:105.70px;">/home/u3p</div>
<div class="a" style="left:531.4px;top:102.4px;width:12.6px;height:21.6px;box-sizing:border-box;border:1px solid #8b8882;border-radius:2.5px;background:linear-gradient(#fff,#efede9 50%,#d9d6d0);box-shadow:0 1px 0 #fff"></div>
<svg class="a" style="left:533.60px;top:110.00px" width="8" height="4.6" viewBox="0 0 8 4.6"><path d="M0,0 H7.8 L3.9,4.4 Z" fill="#000"/></svg>
<svg class="a" style="left:548.40px;top:105.60px" width="8.4" height="13.6" viewBox="0 0 8.4 13.6"><defs><linearGradient id="gg" x1="0" y1="0" x2="1" y2="0"><stop offset="0" stop-color="#8a8a8a"/><stop offset="1" stop-color="#e8e8e8"/></linearGradient></defs><path d="M.8,.9 L7.4,6.8 L.8,12.7 Z" fill="url(#gg)" stroke="#222" stroke-width="1.1" stroke-linejoin="miter"/></svg>
<div class="a" style="left:41px;top:130.8px;width:11.2px;height:10.6px;border-radius:50%;background:radial-gradient(circle at 45% 40%,#a8a8a8,#7e7e7e 70%,#6e6e6e);box-shadow:0 0 0 .6px #f8f8f8"></div>
<div class="a txt" style="left:59.30px;top:129.20px;">Folders</div>
<div class="a" style="left:325.8px;top:132.3px;width:11.4px;height:10.8px;border-radius:50%;background:radial-gradient(ellipse at 50% 75%,#b4f8a4,#7ee070 55%,#5fcf52);box-shadow:0 0 0 .7px #f4fbf2"></div>
<div class="a pb" style="left:342.5px;width:15.2px"></div>
<div class="a pb" style="left:359.4px;width:41.2px"></div>
<div class="a pb" style="left:402.4px;width:31.4px;background:linear-gradient(#e6e3dd,#dcd9d3);box-shadow:none;border-color:#97948e"></div>
<div class="a txt" style="left:348.20px;top:130.60px;">/</div>
<div class="a txt" style="left:365.20px;top:130.60px;">home</div>
<div class="a txt" style="left:409.40px;top:130.60px;font-weight:bold">u3p</div>
<div class="a" style="left:38px;top:145px;width:281.2px;height:502.6px;background:#98948f"></div>
<div class="a" style="left:39px;top:146px;width:280.2px;height:501.6px;background:#fff"></div>
<div class="a" style="left:49.6px;top:165px;width:1px;height:372.4px;background-image:repeating-linear-gradient(to bottom,#c2c2c2 0,#c2c2c2 1px,transparent 1px,transparent 2px)"></div>
<div class="a" style="left:65.2px;top:253.2px;width:1px;height:8px;background-image:repeating-linear-gradient(to bottom,#c2c2c2 0,#c2c2c2 1px,transparent 1px,transparent 2px)"></div>
<svg class="a" style="left:40.00px;top:150.00px" width="17" height="11" viewBox="0 0 17 11"><defs><linearGradient id="dg" x1="0" y1="0" x2="0" y2="1"><stop offset="0" stop-color="#b4b4b4"/><stop offset=".5" stop-color="#e8e8e8"/><stop offset="1" stop-color="#c8c8c8"/></linearGradient></defs><path d="M0.7,8.8 L0.7,5 Q1.4,0.7 3.8,0.7 L13.2,0.7 Q15.6,0.7 16.3,5 L16.3,8.8 Q16.3,10.3 14.8,10.3 L2.2,10.3 Q0.7,10.3 0.7,8.8 Z" fill="#fdfdfd" stroke="#3c3c3c" stroke-width="1"/><rect x="3.2" y="3.6" width="10.6" height="3.8" rx=".8" fill="url(#dg)"/><path d="M1.4,10 H15.6" stroke="#222" stroke-width="1"/><path d="M1.6,8.9 H15.4" stroke="#b0b0b0" stroke-width="0.7"/></svg>
<div class="a txt" style="left:61.20px;top:147.80px;">/</div>
<div class="a" style="left:51.4px;top:173.80px;width:1px;height:1px;background:#c2c2c2"></div><div class="a" style="left:53.4px;top:173.80px;width:1px;height:1px;background:#c2c2c2"></div>
<svg class="a" style="left:56.10px;top:166.60px" width="15.00" height="13.60" viewBox="0 0 15 13.6"><defs><linearGradient id="fg" x1="1" y1="0" x2="0" y2="1"><stop offset="0" stop-color="#b9c7e8"/><stop offset="1" stop-color="#8d9dc6"/></linearGradient></defs><path d="M0.6,13 L0.6,2.4 Q0.6,0.6 2.4,0.6 L5.6,0.6 Q7,0.6 7.4,2.3 L14.4,2.3 L14.4,13 Z" fill="url(#fg)" stroke="#2c3650" stroke-width="1.1"/><path d="M1.3,2.6 Q1.3,1.3 2.6,1.3 L5.4,1.3 Q6.3,1.3 6.7,2.6 Q6.2,3.3 4,3.3 Q1.8,3.3 1.3,2.6Z" fill="#7c8db6"/><path d="M1.6,1.9 Q2.2,1.3 3,1.3 L5.2,1.3 Q5.9,1.4 6.2,2 Z" fill="#c9d4ee"/></svg>
<div class="a txt" style="left:75.90px;top:166.00px;">bin</div>
<div class="a" style="left:45.70px;top:188.20px;width:6.6px;height:6.6px;border:1px solid #a0a0a0;background:#fff"></div><div class="a" style="left:47.90px;top:192.05px;width:4.2px;height:.9px;background:#1a1a1a"></div><div class="a" style="left:49.55px;top:190.40px;width:.9px;height:4.2px;background:#1a1a1a"></div>
<svg class="a" style="left:56.10px;top:184.80px" width="15.00" height="13.60" viewBox="0 0 15 13.6"><defs><linearGradient id="fg" x1="1" y1="0" x2="0" y2="1"><stop offset="0" stop-color="#b9c7e8"/><stop offset="1" stop-color="#8d9dc6"/></linearGradient></defs><path d="M0.6,13 L0.6,2.4 Q0.6,0.6 2.4,0.6 L5.6,0.6 Q7,0.6 7.4,2.3 L14.4,2.3 L14.4,13 Z" fill="url(#fg)" stroke="#2c3650" stroke-width="1.1"/><path d="M1.3,2.6 Q1.3,1.3 2.6,1.3 L5.4,1.3 Q6.3,1.3 6.7,2.6 Q6.2,3.3 4,3.3 Q1.8,3.3 1.3,2.6Z" fill="#7c8db6"/><path d="M1.6,1.9 Q2.2,1.3 3,1.3 L5.2,1.3 Q5.9,1.4 6.2,2 Z" fill="#c9d4ee"/></svg>
<div class="a txt" style="left:75.90px;top:184.20px;">boot</div>
<div class="a" style="left:45.70px;top:206.40px;width:6.6px;height:6.6px;border:1px solid #a0a0a0;background:#fff"></div><div class="a" style="left:47.90px;top:210.25px;width:4.2px;height:.9px;background:#1a1a1a"></div><div class="a" style="left:49.55px;top:208.60px;width:.9px;height:4.2px;background:#1a1a1a"></div>
<svg class="a" style="left:56.40px;top:204.60px" width="17" height="11" viewBox="0 0 17 11"><defs><linearGradient id="dg" x1="0" y1="0" x2="0" y2="1"><stop offset="0" stop-color="#b4b4b4"/><stop offset=".5" stop-color="#e8e8e8"/><stop offset="1" stop-color="#c8c8c8"/></linearGradient></defs><path d="M0.7,8.8 L0.7,5 Q1.4,0.7 3.8,0.7 L13.2,0.7 Q15.6,0.7 16.3,5 L16.3,8.8 Q16.3,10.3 14.8,10.3 L2.2,10.3 Q0.7,10.3 0.7,8.8 Z" fill="#fdfdfd" stroke="#3c3c3c" stroke-width="1"/><rect x="3.2" y="3.6" width="10.6" height="3.8" rx=".8" fill="url(#dg)"/><path d="M1.4,10 H15.6" stroke="#222" stroke-width="1"/><path d="M1.6,8.9 H15.4" stroke="#b0b0b0" stroke-width="0.7"/></svg>
<div class="a txt" style="left:77.30px;top:202.40px;">dev</div>
<div class="a" style="left:45.70px;top:224.60px;width:6.6px;height:6.6px;border:1px solid #a0a0a0;background:#fff"></div><div class="a" style="left:47.90px;top:228.45px;width:4.2px;height:.9px;background:#1a1a1a"></div><div class="a" style="left:49.55px;top:226.80px;width:.9px;height:4.2px;background:#1a1a1a"></div>
<svg class="a" style="left:56.10px;top:221.20px" width="15.00" height="13.60" viewBox="0 0 15 13.6"><defs><linearGradient id="fg" x1="1" y1="0" x2="0" y2="1"><stop offset="0" stop-color="#b9c7e8"/><stop offset="1" stop-color="#8d9dc6"/></linearGradient></defs><path d="M0.6,13 L0.6,2.4 Q0.6,0.6 2.4,0.6 L5.6,0.6 Q7,0.6 7.4,2.3 L14.4,2.3 L14.4,13 Z" fill="url(#fg)" stroke="#2c3650" stroke-width="1.1"/><path d="M1.3,2.6 Q1.3,1.3 2.6,1.3 L5.4,1.3 Q6.3,1.3 6.7,2.6 Q6.2,3.3 4,3.3 Q1.8,3.3 1.3,2.6Z" fill="#7c8db6"/><path d="M1.6,1.9 Q2.2,1.3 3,1.3 L5.2,1.3 Q5.9,1.4 6.2,2 Z" fill="#c9d4ee"/></svg>
<div class="a txt" style="left:75.90px;top:220.60px;">etc</div>
<div class="a" style="left:45.70px;top:242.80px;width:6.6px;height:6.6px;border:1px solid #a0a0a0;background:#fff"></div><div class="a" style="left:47.90px;top:246.65px;width:4.2px;height:.9px;background:#1a1a1a"></div>
<svg class="a" style="left:56.10px;top:239.40px" width="15.00" height="13.60" viewBox="0 0 15 13.6"><defs><linearGradient id="fg" x1="1" y1="0" x2="0" y2="1"><stop offset="0" stop-color="#b9c7e8"/><stop offset="1" stop-color="#8d9dc6"/></linearGradient></defs><path d="M0.6,13 L0.6,2.4 Q0.6,0.6 2.4,0.6 L5.6,0.6 Q7,0.6 7.4,2.3 L14.4,2.3 L14.4,13 Z" fill="url(#fg)" stroke="#2c3650" stroke-width="1.1"/><path d="M1.3,2.6 Q1.3,1.3 2.6,1.3 L5.4,1.3 Q6.3,1.3 6.7,2.6 Q6.2,3.3 4,3.3 Q1.8,3.3 1.3,2.6Z" fill="#7c8db6"/><path d="M1.6,1.9 Q2.2,1.3 3,1.3 L5.2,1.3 Q5.9,1.4 6.2,2 Z" fill="#c9d4ee"/></svg>
<div class="a txt" style="left:75.90px;top:238.80px;">home</div>
<div class="a" style="left:61.40px;top:261.00px;width:6.6px;height:6.6px;border:1px solid #a0a0a0;background:#fff"></div><div class="a" style="left:63.60px;top:264.85px;width:4.2px;height:.9px;background:#1a1a1a"></div><div class="a" style="left:65.25px;top:263.20px;width:.9px;height:4.2px;background:#1a1a1a"></div>
<svg class="a" style="left:72.00px;top:257.60px" width="15.00" height="13.60" viewBox="0 0 15 13.6"><defs><linearGradient id="fg" x1="1" y1="0" x2="0" y2="1"><stop offset="0" stop-color="#b9c7e8"/><stop offset="1" stop-color="#8d9dc6"/></linearGradient></defs><path d="M0.6,13 L0.6,2.4 Q0.6,0.6 2.4,0.6 L5.6,0.6 Q7,0.6 7.4,2.3 L14.4,2.3 L14.4,13 Z" fill="#6d7da4" stroke="#2c3650" stroke-width="1.1"/><rect x="2" y="3.6" width="11" height="2" fill="#e8edf8"/><path d="M0.6,13 L0.6,6 L14.4,5.2 L14.4,13 Z" fill="url(#fg)" stroke="#2c3650" stroke-width="1.1"/><rect x="1.6" y="8" width="11.6" height="1.2" fill="#7686ae" opacity=".7"/></svg>
<div class="a" style="left:90.1px;top:254.80px;width:23px;height:18.2px;background:#0a246a"></div>
<div class="a txt" style="left:91.80px;top:257.00px;color:#fff">u3p</div>
<div class="a" style="left:45.70px;top:279.20px;width:6.6px;height:6.6px;border:1px solid #a0a0a0;background:#fff"></div><div class="a" style="left:47.90px;top:283.05px;width:4.2px;height:.9px;background:#1a1a1a"></div><div class="a" style="left:49.55px;top:281.40px;width:.9px;height:4.2px;background:#1a1a1a"></div>
<svg class="a" style="left:56.10px;top:275.80px" width="15.00" height="13.60" viewBox="0 0 15 13.6"><defs><linearGradient id="fg" x1="1" y1="0" x2="0" y2="1"><stop offset="0" stop-color="#b9c7e8"/><stop offset="1" stop-color="#8d9dc6"/></linearGradient></defs><path d="M0.6,13 L0.6,2.4 Q0.6,0.6 2.4,0.6 L5.6,0.6 Q7,0.6 7.4,2.3 L14.4,2.3 L14.4,13 Z" fill="url(#fg)" stroke="#2c3650" stroke-width="1.1"/><path d="M1.3,2.6 Q1.3,1.3 2.6,1.3 L5.4,1.3 Q6.3,1.3 6.7,2.6 Q6.2,3.3 4,3.3 Q1.8,3.3 1.3,2.6Z" fill="#7c8db6"/><path d="M1.6,1.9 Q2.2,1.3 3,1.3 L5.2,1.3 Q5.9,1.4 6.2,2 Z" fill="#c9d4ee"/></svg>
<div class="a txt" style="left:75.90px;top:275.20px;">lib</div>
<div class="a" style="left:51.4px;top:301.20px;width:1px;height:1px;background:#c2c2c2"></div><div class="a" style="left:53.4px;top:301.20px;width:1px;height:1px;background:#c2c2c2"></div>
<svg class="a" style="left:56.10px;top:294.00px" width="15.00" height="13.60" viewBox="0 0 15 13.6"><defs><linearGradient id="fg" x1="1" y1="0" x2="0" y2="1"><stop offset="0" stop-color="#b9c7e8"/><stop offset="1" stop-color="#8d9dc6"/></linearGradient></defs><path d="M0.6,13 L0.6,2.4 Q0.6,0.6 2.4,0.6 L5.6,0.6 Q7,0.6 7.4,2.3 L14.4,2.3 L14.4,13 Z" fill="url(#fg)" stroke="#2c3650" stroke-width="1.1"/><path d="M1.3,2.6 Q1.3,1.3 2.6,1.3 L5.4,1.3 Q6.3,1.3 6.7,2.6 Q6.2,3.3 4,3.3 Q1.8,3.3 1.3,2.6Z" fill="#7c8db6"/><path d="M1.6,1.9 Q2.2,1.3 3,1.3 L5.2,1.3 Q5.9,1.4 6.2,2 Z" fill="#c9d4ee"/></svg>
<div class="a txt" style="left:75.90px;top:293.40px;">lib64</div>
<div class="a" style="left:51.4px;top:319.40px;width:1px;height:1px;background:#c2c2c2"></div><div class="a" style="left:53.4px;top:319.40px;width:1px;height:1px;background:#c2c2c2"></div>
<svg class="a" style="left:56.10px;top:312.20px" width="15.00" height="13.60" viewBox="0 0 15 13.6"><defs><linearGradient id="fg" x1="1" y1="0" x2="0" y2="1"><stop offset="0" stop-color="#b9c7e8"/><stop offset="1" stop-color="#8d9dc6"/></linearGradient></defs><path d="M0.6,13 L0.6,2.4 Q0.6,0.6 2.4,0.6 L5.6,0.6 Q7,0.6 7.4,2.3 L14.4,2.3 L14.4,13 Z" fill="url(#fg)" stroke="#2c3650" stroke-width="1.1"/><path d="M1.3,2.6 Q1.3,1.3 2.6,1.3 L5.4,1.3 Q6.3,1.3 6.7,2.6 Q6.2,3.3 4,3.3 Q1.8,3.3 1.3,2.6Z" fill="#7c8db6"/><path d="M1.6,1.9 Q2.2,1.3 3,1.3 L5.2,1.3 Q5.9,1.4 6.2,2 Z" fill="#c9d4ee"/><rect x="6.2" y="6.6" width="6.6" height="5.6" rx="0.8" fill="#f0a030" stroke="#5a3200" stroke-width="0.9"/><path d="M7.8,6.6 V5.6 Q7.8,4 9.5,4 Q11.2,4 11.2,5.6 V6.6" fill="none" stroke="#3a2a10" stroke-width="1.1"/><rect x="9" y="8.2" width="1.1" height="2.4" fill="#fff3c8"/></svg>
<div class="a txt" style="left:75.90px;top:311.60px;">lost+found</div>
<div class="a" style="left:45.70px;top:333.80px;width:6.6px;height:6.6px;border:1px solid #a0a0a0;background:#fff"></div><div class="a" style="left:47.90px;top:337.65px;width:4.2px;height:.9px;background:#1a1a1a"></div><div class="a" style="left:49.55px;top:336.00px;width:.9px;height:4.2px;background:#1a1a1a"></div>
<svg class="a" style="left:56.10px;top:330.40px" width="15.00" height="13.60" viewBox="0 0 15 13.6"><defs><linearGradient id="fg" x1="1" y1="0" x2="0" y2="1"><stop offset="0" stop-color="#b9c7e8"/><stop offset="1" stop-color="#8d9dc6"/></linearGradient></defs><path d="M0.6,13 L0.6,2.4 Q0.6,0.6 2.4,0.6 L5.6,0.6 Q7,0.6 7.4,2.3 L14.4,2.3 L14.4,13 Z" fill="url(#fg)" stroke="#2c3650" stroke-width="1.1"/><path d="M1.3,2.6 Q1.3,1.3 2.6,1.3 L5.4,1.3 Q6.3,1.3 6.7,2.6 Q6.2,3.3 4,3.3 Q1.8,3.3 1.3,2.6Z" fill="#7c8db6"/><path d="M1.6,1.9 Q2.2,1.3 3,1.3 L5.2,1.3 Q5.9,1.4 6.2,2 Z" fill="#c9d4ee"/></svg>
<div class="a txt" style="left:75.90px;top:329.80px;">media</div>
<div class="a" style="left:51.4px;top:355.80px;width:1px;height:1px;background:#c2c2c2"></div><div class="a" style="left:53.4px;top:355.80px;width:1px;height:1px;background:#c2c2c2"></div>
<svg class="a" style="left:56.10px;top:348.60px" width="15.00" height="13.60" viewBox="0 0 15 13.6"><defs><linearGradient id="fg" x1="1" y1="0" x2="0" y2="1"><stop offset="0" stop-color="#b9c7e8"/><stop offset="1" stop-color="#8d9dc6"/></linearGradient></defs><path d="M0.6,13 L0.6,2.4 Q0.6,0.6 2.4,0.6 L5.6,0.6 Q7,0.6 7.4,2.3 L14.4,2.3 L14.4,13 Z" fill="url(#fg)" stroke="#2c3650" stroke-width="1.1"/><path d="M1.3,2.6 Q1.3,1.3 2.6,1.3 L5.4,1.3 Q6.3,1.3 6.7,2.6 Q6.2,3.3 4,3.3 Q1.8,3.3 1.3,2.6Z" fill="#7c8db6"/><path d="M1.6,1.9 Q2.2,1.3 3,1.3 L5.2,1.3 Q5.9,1.4 6.2,2 Z" fill="#c9d4ee"/></svg>
<div class="a txt" style="left:75.90px;top:348.00px;">mnt</div>
<div class="a" style="left:45.70px;top:370.20px;width:6.6px;height:6.6px;border:1px solid #a0a0a0;background:#fff"></div><div class="a" style="left:47.90px;top:374.05px;width:4.2px;height:.9px;background:#1a1a1a"></div><div class="a" style="left:49.55px;top:372.40px;width:.9px;height:4.2px;background:#1a1a1a"></div>
<svg class="a" style="left:56.10px;top:366.80px" width="15.00" height="13.60" viewBox="0 0 15 13.6"><defs><linearGradient id="fg" x1="1" y1="0" x2="0" y2="1"><stop offset="0" stop-color="#b9c7e8"/><stop offset="1" stop-color="#8d9dc6"/></linearGradient></defs><path d="M0.6,13 L0.6,2.4 Q0.6,0.6 2.4,0.6 L5.6,0.6 Q7,0.6 7.4,2.3 L14.4,2.3 L14.4,13 Z" fill="url(#fg)" stroke="#2c3650" stroke-width="1.1"/><path d="M1.3,2.6 Q1.3,1.3 2.6,1.3 L5.4,1.3 Q6.3,1.3 6.7,2.6 Q6.2,3.3 4,3.3 Q1.8,3.3 1.3,2.6Z" fill="#7c8db6"/><path d="M1.6,1.9 Q2.2,1.3 3,1.3 L5.2,1.3 Q5.9,1.4 6.2,2 Z" fill="#c9d4ee"/></svg>
<div class="a txt" style="left:75.90px;top:366.20px;">opt</div>
<div class="a" style="left:45.70px;top:388.40px;width:6.6px;height:6.6px;border:1px solid #a0a0a0;background:#fff"></div><div class="a" style="left:47.90px;top:392.25px;width:4.2px;height:.9px;background:#1a1a1a"></div><div class="a" style="left:49.55px;top:390.60px;width:.9px;height:4.2px;background:#1a1a1a"></div>
<svg class="a" style="left:56.40px;top:386.60px" width="17" height="11" viewBox="0 0 17 11"><defs><linearGradient id="dg" x1="0" y1="0" x2="0" y2="1"><stop offset="0" stop-color="#b4b4b4"/><stop offset=".5" stop-color="#e8e8e8"/><stop offset="1" stop-color="#c8c8c8"/></linearGradient></defs><path d="M0.7,8.8 L0.7,5 Q1.4,0.7 3.8,0.7 L13.2,0.7 Q15.6,0.7 16.3,5 L16.3,8.8 Q16.3,10.3 14.8,10.3 L2.2,10.3 Q0.7,10.3 0.7,8.8 Z" fill="#fdfdfd" stroke="#3c3c3c" stroke-width="1"/><rect x="3.2" y="3.6" width="10.6" height="3.8" rx=".8" fill="url(#dg)"/><path d="M1.4,10 H15.6" stroke="#222" stroke-width="1"/><path d="M1.6,8.9 H15.4" stroke="#b0b0b0" stroke-width="0.7"/></svg>
<div class="a txt" style="left:77.30px;top:384.40px;">proc</div>
<div class="a" style="left:51.4px;top:410.40px;width:1px;height:1px;background:#c2c2c2"></div><div class="a" style="left:53.4px;top:410.40px;width:1px;height:1px;background:#c2c2c2"></div>
<svg class="a" style="left:56.10px;top:403.20px" width="15.00" height="13.60" viewBox="0 0 15 13.6"><defs><linearGradient id="fg" x1="1" y1="0" x2="0" y2="1"><stop offset="0" stop-color="#b9c7e8"/><stop offset="1" stop-color="#8d9dc6"/></linearGradient></defs><path d="M0.6,13 L0.6,2.4 Q0.6,0.6 2.4,0.6 L5.6,0.6 Q7,0.6 7.4,2.3 L14.4,2.3 L14.4,13 Z" fill="url(#fg)" stroke="#2c3650" stroke-width="1.1"/><path d="M1.3,2.6 Q1.3,1.3 2.6,1.3 L5.4,1.3 Q6.3,1.3 6.7,2.6 Q6.2,3.3 4,3.3 Q1.8,3.3 1.3,2.6Z" fill="#7c8db6"/><path d="M1.6,1.9 Q2.2,1.3 3,1.3 L5.2,1.3 Q5.9,1.4 6.2,2 Z" fill="#c9d4ee"/><rect x="6.2" y="6.6" width="6.6" height="5.6" rx="0.8" fill="#f0a030" stroke="#5a3200" stroke-width="0.9"/><path d="M7.8,6.6 V5.6 Q7.8,4 9.5,4 Q11.2,4 11.2,5.6 V6.6" fill="none" stroke="#3a2a10" stroke-width="1.1"/><rect x="9" y="8.2" width="1.1" height="2.4" fill="#fff3c8"/></svg>
<div class="a txt" style="left:75.90px;top:402.60px;">root</div>
<div class="a" style="left:45.70px;top:424.80px;width:6.6px;height:6.6px;border:1px solid #a0a0a0;background:#fff"></div><div class="a" style="left:47.90px;top:428.65px;width:4.2px;height:.9px;background:#1a1a1a"></div><div class="a" style="left:49.55px;top:427.00px;width:.9px;height:4.2px;background:#1a1a1a"></div>
<svg class="a" style="left:56.40px;top:423.00px" width="17" height="11" viewBox="0 0 17 11"><defs><linearGradient id="dg" x1="0" y1="0" x2="0" y2="1"><stop offset="0" stop-color="#b4b4b4"/><stop offset=".5" stop-color="#e8e8e8"/><stop offset="1" stop-color="#c8c8c8"/></linearGradient></defs><path d="M0.7,8.8 L0.7,5 Q1.4,0.7 3.8,0.7 L13.2,0.7 Q15.6,0.7 16.3,5 L16.3,8.8 Q16.3,10.3 14.8,10.3 L2.2,10.3 Q0.7,10.3 0.7,8.8 Z" fill="#fdfdfd" stroke="#3c3c3c" stroke-width="1"/><rect x="3.2" y="3.6" width="10.6" height="3.8" rx=".8" fill="url(#dg)"/><path d="M1.4,10 H15.6" stroke="#222" stroke-width="1"/><path d="M1.6,8.9 H15.4" stroke="#b0b0b0" stroke-width="0.7"/></svg>
<div class="a txt" style="left:77.30px;top:420.80px;">run</div>
<div class="a" style="left:51.4px;top:446.80px;width:1px;height:1px;background:#c2c2c2"></div><div class="a" style="left:53.4px;top:446.80px;width:1px;height:1px;background:#c2c2c2"></div>
<svg class="a" style="left:56.10px;top:439.60px" width="15.00" height="13.60" viewBox="0 0 15 13.6"><defs><linearGradient id="fg" x1="1" y1="0" x2="0" y2="1"><stop offset="0" stop-color="#b9c7e8"/><stop offset="1" stop-color="#8d9dc6"/></linearGradient></defs><path d="M0.6,13 L0.6,2.4 Q0.6,0.6 2.4,0.6 L5.6,0.6 Q7,0.6 7.4,2.3 L14.4,2.3 L14.4,13 Z" fill="url(#fg)" stroke="#2c3650" stroke-width="1.1"/><path d="M1.3,2.6 Q1.3,1.3 2.6,1.3 L5.4,1.3 Q6.3,1.3 6.7,2.6 Q6.2,3.3 4,3.3 Q1.8,3.3 1.3,2.6Z" fill="#7c8db6"/><path d="M1.6,1.9 Q2.2,1.3 3,1.3 L5.2,1.3 Q5.9,1.4 6.2,2 Z" fill="#c9d4ee"/></svg>
<div class="a txt" style="left:75.90px;top:439.00px;">sbin</div>
<div class="a" style="left:51.4px;top:465.00px;width:1px;height:1px;background:#c2c2c2"></div><div class="a" style="left:53.4px;top:465.00px;width:1px;height:1px;background:#c2c2c2"></div>
<svg class="a" style="left:56.10px;top:457.80px" width="15.00" height="13.60" viewBox="0 0 15 13.6"><defs><linearGradient id="fg" x1="1" y1="0" x2="0" y2="1"><stop offset="0" stop-color="#b9c7e8"/><stop offset="1" stop-color="#8d9dc6"/></linearGradient></defs><path d="M0.6,13 L0.6,2.4 Q0.6,0.6 2.4,0.6 L5.6,0.6 Q7,0.6 7.4,2.3 L14.4,2.3 L14.4,13 Z" fill="url(#fg)" stroke="#2c3650" stroke-width="1.1"/><path d="M1.3,2.6 Q1.3,1.3 2.6,1.3 L5.4,1.3 Q6.3,1.3 6.7,2.6 Q6.2,3.3 4,3.3 Q1.8,3.3 1.3,2.6Z" fill="#7c8db6"/><path d="M1.6,1.9 Q2.2,1.3 3,1.3 L5.2,1.3 Q5.9,1.4 6.2,2 Z" fill="#c9d4ee"/></svg>
<div class="a txt" style="left:75.90px;top:457.20px;">srv</div>
<div class="a" style="left:45.70px;top:479.40px;width:6.6px;height:6.6px;border:1px solid #a0a0a0;background:#fff"></div><div class="a" style="left:47.90px;top:483.25px;width:4.2px;height:.9px;background:#1a1a1a"></div><div class="a" style="left:49.55px;top:481.60px;width:.9px;height:4.2px;background:#1a1a1a"></div>
<svg class="a" style="left:56.40px;top:477.60px" width="17" height="11" viewBox="0 0 17 11"><defs><linearGradient id="dg" x1="0" y1="0" x2="0" y2="1"><stop offset="0" stop-color="#b4b4b4"/><stop offset=".5" stop-color="#e8e8e8"/><stop offset="1" stop-color="#c8c8c8"/></linearGradient></defs><path d="M0.7,8.8 L0.7,5 Q1.4,0.7 3.8,0.7 L13.2,0.7 Q15.6,0.7 16.3,5 L16.3,8.8 Q16.3,10.3 14.8,10.3 L2.2,10.3 Q0.7,10.3 0.7,8.8 Z" fill="#fdfdfd" stroke="#3c3c3c" stroke-width="1"/><rect x="3.2" y="3.6" width="10.6" height="3.8" rx=".8" fill="url(#dg)"/><path d="M1.4,10 H15.6" stroke="#222" stroke-width="1"/><path d="M1.6,8.9 H15.4" stroke="#b0b0b0" stroke-width="0.7"/></svg>
<div class="a txt" style="left:77.30px;top:475.40px;">sys</div>
<div class="a" style="left:45.70px;top:497.60px;width:6.6px;height:6.6px;border:1px solid #a0a0a0;background:#fff"></div><div class="a" style="left:47.90px;top:501.45px;width:4.2px;height:.9px;background:#1a1a1a"></div><div class="a" style="left:49.55px;top:499.80px;width:.9px;height:4.2px;background:#1a1a1a"></div>
<svg class="a" style="left:56.10px;top:494.20px" width="15.00" height="13.60" viewBox="0 0 15 13.6"><defs><linearGradient id="fg" x1="1" y1="0" x2="0" y2="1"><stop offset="0" stop-color="#b9c7e8"/><stop offset="1" stop-color="#8d9dc6"/></linearGradient></defs><path d="M0.6,13 L0.6,2.4 Q0.6,0.6 2.4,0.6 L5.6,0.6 Q7,0.6 7.4,2.3 L14.4,2.3 L14.4,13 Z" fill="url(#fg)" stroke="#2c3650" stroke-width="1.1"/><path d="M1.3,2.6 Q1.3,1.3 2.6,1.3 L5.4,1.3 Q6.3,1.3 6.7,2.6 Q6.2,3.3 4,3.3 Q1.8,3.3 1.3,2.6Z" fill="#7c8db6"/><path d="M1.6,1.9 Q2.2,1.3 3,1.3 L5.2,1.3 Q5.9,1.4 6.2,2 Z" fill="#c9d4ee"/></svg>
<div class="a txt" style="left:75.90px;top:493.60px;">tmp</div>
<div class="a" style="left:45.70px;top:515.80px;width:6.6px;height:6.6px;border:1px solid #a0a0a0;background:#fff"></div><div class="a" style="left:47.90px;top:519.65px;width:4.2px;height:.9px;background:#1a1a1a"></div><div class="a" style="left:49.55px;top:518.00px;width:.9px;height:4.2px;background:#1a1a1a"></div>
<svg class="a" style="left:56.10px;top:512.40px" width="15.00" height="13.60" viewBox="0 0 15 13.6"><defs><linearGradient id="fg" x1="1" y1="0" x2="0" y2="1"><stop offset="0" stop-color="#b9c7e8"/><stop offset="1" stop-color="#8d9dc6"/></linearGradient></defs><path d="M0.6,13 L0.6,2.4 Q0.6,0.6 2.4,0.6 L5.6,0.6 Q7,0.6 7.4,2.3 L14.4,2.3 L14.4,13 Z" fill="url(#fg)" stroke="#2c3650" stroke-width="1.1"/><path d="M1.3,2.6 Q1.3,1.3 2.6,1.3 L5.4,1.3 Q6.3,1.3 6.7,2.6 Q6.2,3.3 4,3.3 Q1.8,3.3 1.3,2.6Z" fill="#7c8db6"/><path d="M1.6,1.9 Q2.2,1.3 3,1.3 L5.2,1.3 Q5.9,1.4 6.2,2 Z" fill="#c9d4ee"/></svg>
<div class="a txt" style="left:75.90px;top:511.80px;">usr</div>
<div class="a" style="left:45.70px;top:534.00px;width:6.6px;height:6.6px;border:1px solid #a0a0a0;background:#fff"></div><div class="a" style="left:47.90px;top:537.85px;width:4.2px;height:.9px;background:#1a1a1a"></div><div class="a" style="left:49.55px;top:536.20px;width:.9px;height:4.2px;background:#1a1a1a"></div>
<svg class="a" style="left:56.10px;top:530.60px" width="15.00" height="13.60" viewBox="0 0 15 13.6"><defs><linearGradient id="fg" x1="1" y1="0" x2="0" y2="1"><stop offset="0" stop-color="#b9c7e8"/><stop offset="1" stop-color="#8d9dc6"/></linearGradient></defs><path d="M0.6,13 L0.6,2.4 Q0.6,0.6 2.4,0.6 L5.6,0.6 Q7,0.6 7.4,2.3 L14.4,2.3 L14.4,13 Z" fill="url(#fg)" stroke="#2c3650" stroke-width="1.1"/><path d="M1.3,2.6 Q1.3,1.3 2.6,1.3 L5.4,1.3 Q6.3,1.3 6.7,2.6 Q6.2,3.3 4,3.3 Q1.8,3.3 1.3,2.6Z" fill="#7c8db6"/><path d="M1.6,1.9 Q2.2,1.3 3,1.3 L5.2,1.3 Q5.9,1.4 6.2,2 Z" fill="#c9d4ee"/></svg>
<div class="a txt" style="left:75.90px;top:530.00px;">var</div>
<div class="a" style="left:322.2px;top:149px;width:589.8px;height:498.6px;background:#a5a29d"></div>
<div class="a" style="left:323.6px;top:150px;width:588.4px;height:497.6px;background:#fff"></div>
<div class="a" style="left:323.4px;top:150px;width:587.6px;height:20px;background:#edeae4"></div>
<div class="a hd" style="left:323.40px;width:88.10px;top:150.2px;height:19.8px"></div>
<div class="a txt" style="left:326.70px;top:152.90px;">Name</div>
<div class="a hd" style="left:411.50px;width:65.10px;top:150.2px;height:19.8px"></div>
<div class="a txt" style="left:413.50px;top:152.90px;">Size</div>
<div class="a hd" style="left:476.60px;width:66.10px;top:150.2px;height:19.8px"></div>
<div class="a txt" style="left:479.00px;top:152.90px;">Type</div>
<div class="a hd" style="left:542.70px;width:62.30px;top:150.2px;height:19.8px"></div>
<div class="a txt" style="left:545.00px;top:152.90px;">Extension</div>
<div class="a hd" style="left:605.00px;width:135.70px;top:150.2px;height:19.8px"></div>
<div class="a txt" style="left:607.60px;top:152.90px;">Modified date</div>
<div class="a hd" style="left:740.70px;width:37.80px;top:150.2px;height:19.8px"></div>
<div class="a txt" style="left:743.00px;top:152.90px;">User</div>
<div class="a hd" style="left:778.50px;width:54.50px;top:150.2px;height:19.8px"></div>
<div class="a txt" style="left:781.20px;top:152.90px;">Group</div>
<div class="a hd" style="left:833.00px;width:73.50px;top:150.2px;height:19.8px"></div>
<div class="a txt" style="left:836.00px;top:152.90px;">Permissions</div>
<div class="a hd" style="left:906.50px;width:4.50px;top:150.2px;height:19.8px"></div>
<svg class="a" style="left:526.6px;top:154px" width="14" height="13.4" viewBox="0 0 14 13.4"><path d="M1,1 L7,12.4" stroke="#8e8a84" stroke-width="1"/><path d="M1,1 H13" stroke="#8e8a84" stroke-width="1"/><path d="M13,1 L7,12.4" stroke="#fff" stroke-width="1.2"/></svg>
<div class="a" style="left:476.6px;top:170.00px;width:66.1px;height:218.16px;background:#f5f5f5"></div>
<svg class="a" style="left:325.10px;top:171.90px" width="15.00" height="13.60" viewBox="0 0 15 13.6"><defs><linearGradient id="fg" x1="1" y1="0" x2="0" y2="1"><stop offset="0" stop-color="#b9c7e8"/><stop offset="1" stop-color="#8d9dc6"/></linearGradient></defs><path d="M0.6,13 L0.6,2.4 Q0.6,0.6 2.4,0.6 L5.6,0.6 Q7,0.6 7.4,2.3 L14.4,2.3 L14.4,13 Z" fill="url(#fg)" stroke="#2c3650" stroke-width="1.1"/><path d="M1.3,2.6 Q1.3,1.3 2.6,1.3 L5.4,1.3 Q6.3,1.3 6.7,2.6 Q6.2,3.3 4,3.3 Q1.8,3.3 1.3,2.6Z" fill="#7c8db6"/><path d="M1.6,1.9 Q2.2,1.3 3,1.3 L5.2,1.3 Q5.9,1.4 6.2,2 Z" fill="#c9d4ee"/><path d="M10.5,11.6 V6 M8.6,8 L10.5,5.6 L12.4,8 M8,11.6 H10.9" fill="none" stroke="#0a0a14" stroke-width="1.5"/></svg>
<div class="a txt" style="left:344.00px;top:171.90px;">..</div>
<div class="a txt" style="left:478.00px;top:171.90px;">Folder</div>
<div class="a txt" style="left:607.00px;top:171.90px;">09/10/2015 01:47:45 AM</div>
<div class="a txt" style="left:741.80px;top:171.90px;">root</div>
<div class="a txt" style="left:780.30px;top:171.90px;">root</div>
<div class="a txt" style="left:834.70px;top:171.90px;">drwxr-xr-x</div>
<div class="a" style="left:323.2px;top:188.18px;width:583.1px;height:18.18px;background:#ededed"></div>
<div class="a" style="left:476.6px;top:188.18px;width:66.1px;height:18.18px;background:#e3e3e3"></div>
<svg class="a" style="left:325.10px;top:190.08px" width="15.00" height="13.60" viewBox="0 0 15 13.6"><defs><linearGradient id="fg" x1="1" y1="0" x2="0" y2="1"><stop offset="0" stop-color="#b9c7e8"/><stop offset="1" stop-color="#8d9dc6"/></linearGradient></defs><path d="M0.6,13 L0.6,2.4 Q0.6,0.6 2.4,0.6 L5.6,0.6 Q7,0.6 7.4,2.3 L14.4,2.3 L14.4,13 Z" fill="url(#fg)" stroke="#2c3650" stroke-width="1.1"/><path d="M1.3,2.6 Q1.3,1.3 2.6,1.3 L5.4,1.3 Q6.3,1.3 6.7,2.6 Q6.2,3.3 4,3.3 Q1.8,3.3 1.3,2.6Z" fill="#7c8db6"/><path d="M1.6,1.9 Q2.2,1.3 3,1.3 L5.2,1.3 Q5.9,1.4 6.2,2 Z" fill="#c9d4ee"/></svg>
<div class="a txt" style="left:344.00px;top:190.08px;">Desktop</div>
<div class="a txt" style="left:478.00px;top:190.08px;">Folder</div>
<div class="a txt" style="left:607.00px;top:190.08px;">03/25/2016 06:21:26 PM</div>
<div class="a txt" style="left:741.80px;top:190.08px;">u3p</div>
<div class="a txt" style="left:780.30px;top:190.08px;">u3p</div>
<div class="a txt" style="left:834.70px;top:190.08px;">drwxr-xr-x</div>
<svg class="a" style="left:325.10px;top:208.26px" width="15.00" height="13.60" viewBox="0 0 15 13.6"><defs><linearGradient id="fg" x1="1" y1="0" x2="0" y2="1"><stop offset="0" stop-color="#b9c7e8"/><stop offset="1" stop-color="#8d9dc6"/></linearGradient></defs><path d="M0.6,13 L0.6,2.4 Q0.6,0.6 2.4,0.6 L5.6,0.6 Q7,0.6 7.4,2.3 L14.4,2.3 L14.4,13 Z" fill="url(#fg)" stroke="#2c3650" stroke-width="1.1"/><path d="M1.3,2.6 Q1.3,1.3 2.6,1.3 L5.4,1.3 Q6.3,1.3 6.7,2.6 Q6.2,3.3 4,3.3 Q1.8,3.3 1.3,2.6Z" fill="#7c8db6"/><path d="M1.6,1.9 Q2.2,1.3 3,1.3 L5.2,1.3 Q5.9,1.4 6.2,2 Z" fill="#c9d4ee"/></svg>
<div class="a txt" style="left:344.00px;top:208.26px;">Documents</div>
<div class="a txt" style="left:478.00px;top:208.26px;">Folder</div>
<div class="a txt" style="left:607.00px;top:208.26px;">09/10/2015 01:49:09 AM</div>
<div class="a txt" style="left:741.80px;top:208.26px;">u3p</div>
<div class="a txt" style="left:780.30px;top:208.26px;">u3p</div>
<div class="a txt" style="left:834.70px;top:208.26px;">drwxr-xr-x</div>
<div class="a" style="left:323.2px;top:224.54px;width:583.1px;height:18.18px;background:#ededed"></div>
<div class="a" style="left:476.6px;top:224.54px;width:66.1px;height:18.18px;background:#e3e3e3"></div>
<svg class="a" style="left:325.10px;top:226.44px" width="15.00" height="13.60" viewBox="0 0 15 13.6"><defs><linearGradient id="fg" x1="1" y1="0" x2="0" y2="1"><stop offset="0" stop-color="#b9c7e8"/><stop offset="1" stop-color="#8d9dc6"/></linearGradient></defs><path d="M0.6,13 L0.6,2.4 Q0.6,0.6 2.4,0.6 L5.6,0.6 Q7,0.6 7.4,2.3 L14.4,2.3 L14.4,13 Z" fill="url(#fg)" stroke="#2c3650" stroke-width="1.1"/><path d="M1.3,2.6 Q1.3,1.3 2.6,1.3 L5.4,1.3 Q6.3,1.3 6.7,2.6 Q6.2,3.3 4,3.3 Q1.8,3.3 1.3,2.6Z" fill="#7c8db6"/><path d="M1.6,1.9 Q2.2,1.3 3,1.3 L5.2,1.3 Q5.9,1.4 6.2,2 Z" fill="#c9d4ee"/></svg>
<div class="a txt" style="left:344.00px;top:226.44px;">Downloads</div>
<div class="a txt" style="left:478.00px;top:226.44px;">Folder</div>
<div class="a txt" style="left:607.00px;top:226.44px;">08/27/2016 10:11:52 PM</div>
<div class="a txt" style="left:741.80px;top:226.44px;">u3p</div>
<div class="a txt" style="left:780.30px;top:226.44px;">u3p</div>
<div class="a txt" style="left:834.70px;top:226.44px;">drwxr-xr-x</div>
<svg class="a" style="left:325.10px;top:244.62px" width="15.00" height="13.60" viewBox="0 0 15 13.6"><defs><linearGradient id="fg" x1="1" y1="0" x2="0" y2="1"><stop offset="0" stop-color="#b9c7e8"/><stop offset="1" stop-color="#8d9dc6"/></linearGradient></defs><path d="M0.6,13 L0.6,2.4 Q0.6,0.6 2.4,0.6 L5.6,0.6 Q7,0.6 7.4,2.3 L14.4,2.3 L14.4,13 Z" fill="url(#fg)" stroke="#2c3650" stroke-width="1.1"/><path d="M1.3,2.6 Q1.3,1.3 2.6,1.3 L5.4,1.3 Q6.3,1.3 6.7,2.6 Q6.2,3.3 4,3.3 Q1.8,3.3 1.3,2.6Z" fill="#7c8db6"/><path d="M1.6,1.9 Q2.2,1.3 3,1.3 L5.2,1.3 Q5.9,1.4 6.2,2 Z" fill="#c9d4ee"/></svg>
<div class="a txt" style="left:344.00px;top:244.62px;">GNUstep</div>
<div class="a txt" style="left:478.00px;top:244.62px;">Folder</div>
<div class="a txt" style="left:607.00px;top:244.62px;">10/02/2015 08:04:52 PM</div>
<div class="a txt" style="left:741.80px;top:244.62px;">u3p</div>
<div class="a txt" style="left:780.30px;top:244.62px;">u3p</div>
<div class="a txt" style="left:834.70px;top:244.62px;">drwxr-xr-x</div>
<div class="a" style="left:323.2px;top:260.90px;width:583.1px;height:18.18px;background:#ededed"></div>
<div class="a" style="left:476.6px;top:260.90px;width:66.1px;height:18.18px;background:#e3e3e3"></div>
<svg class="a" style="left:325.10px;top:262.80px" width="15.00" height="13.60" viewBox="0 0 15 13.6"><defs><linearGradient id="fg" x1="1" y1="0" x2="0" y2="1"><stop offset="0" stop-color="#b9c7e8"/><stop offset="1" stop-color="#8d9dc6"/></linearGradient></defs><path d="M0.6,13 L0.6,2.4 Q0.6,0.6 2.4,0.6 L5.6,0.6 Q7,0.6 7.4,2.3 L14.4,2.3 L14.4,13 Z" fill="url(#fg)" stroke="#2c3650" stroke-width="1.1"/><path d="M1.3,2.6 Q1.3,1.3 2.6,1.3 L5.4,1.3 Q6.3,1.3 6.7,2.6 Q6.2,3.3 4,3.3 Q1.8,3.3 1.3,2.6Z" fill="#7c8db6"/><path d="M1.6,1.9 Q2.2,1.3 3,1.3 L5.2,1.3 Q5.9,1.4 6.2,2 Z" fill="#c9d4ee"/></svg>
<div class="a txt" style="left:344.00px;top:262.80px;">Music</div>
<div class="a txt" style="left:478.00px;top:262.80px;">Folder</div>
<div class="a txt" style="left:607.00px;top:262.80px;">09/10/2015 01:49:09 AM</div>
<div class="a txt" style="left:741.80px;top:262.80px;">u3p</div>
<div class="a txt" style="left:780.30px;top:262.80px;">u3p</div>
<div class="a txt" style="left:834.70px;top:262.80px;">drwxr-xr-x</div>
<svg class="a" style="left:325.10px;top:280.98px" width="15.00" height="13.60" viewBox="0 0 15 13.6"><defs><linearGradient id="fg" x1="1" y1="0" x2="0" y2="1"><stop offset="0" stop-color="#b9c7e8"/><stop offset="1" stop-color="#8d9dc6"/></linearGradient></defs><path d="M0.6,13 L0.6,2.4 Q0.6,0.6 2.4,0.6 L5.6,0.6 Q7,0.6 7.4,2.3 L14.4,2.3 L14.4,13 Z" fill="url(#fg)" stroke="#2c3650" stroke-width="1.1"/><path d="M1.3,2.6 Q1.3,1.3 2.6,1.3 L5.4,1.3 Q6.3,1.3 6.7,2.6 Q6.2,3.3 4,3.3 Q1.8,3.3 1.3,2.6Z" fill="#7c8db6"/><path d="M1.6,1.9 Q2.2,1.3 3,1.3 L5.2,1.3 Q5.9,1.4 6.2,2 Z" fill="#c9d4ee"/></svg>
<div class="a txt" style="left:344.00px;top:280.98px;">nprog</div>
<div class="a txt" style="left:478.00px;top:280.98px;">Folder</div>
<div class="a txt" style="left:607.00px;top:280.98px;">11/24/2016 11:09:19 PM</div>
<div class="a txt" style="left:741.80px;top:280.98px;">u3p</div>
<div class="a txt" style="left:780.30px;top:280.98px;">u3p</div>
<div class="a txt" style="left:834.70px;top:280.98px;">drwxr-xr-x</div>
<div class="a" style="left:323.2px;top:297.26px;width:583.1px;height:18.18px;background:#ededed"></div>
<div class="a" style="left:476.6px;top:297.26px;width:66.1px;height:18.18px;background:#e3e3e3"></div>
<svg class="a" style="left:325.10px;top:299.16px" width="15.00" height="13.60" viewBox="0 0 15 13.6"><defs><linearGradient id="fg" x1="1" y1="0" x2="0" y2="1"><stop offset="0" stop-color="#b9c7e8"/><stop offset="1" stop-color="#8d9dc6"/></linearGradient></defs><path d="M0.6,13 L0.6,2.4 Q0.6,0.6 2.4,0.6 L5.6,0.6 Q7,0.6 7.4,2.3 L14.4,2.3 L14.4,13 Z" fill="url(#fg)" stroke="#2c3650" stroke-width="1.1"/><path d="M1.3,2.6 Q1.3,1.3 2.6,1.3 L5.4,1.3 Q6.3,1.3 6.7,2.6 Q6.2,3.3 4,3.3 Q1.8,3.3 1.3,2.6Z" fill="#7c8db6"/><path d="M1.6,1.9 Q2.2,1.3 3,1.3 L5.2,1.3 Q5.9,1.4 6.2,2 Z" fill="#c9d4ee"/></svg>
<div class="a txt" style="left:344.00px;top:299.16px;">Pictures</div>
<div class="a txt" style="left:478.00px;top:299.16px;">Folder</div>
<div class="a txt" style="left:607.00px;top:299.16px;">03/27/2016 05:28:01 AM</div>
<div class="a txt" style="left:741.80px;top:299.16px;">u3p</div>
<div class="a txt" style="left:780.30px;top:299.16px;">u3p</div>
<div class="a txt" style="left:834.70px;top:299.16px;">drwxr-xr-x</div>
<svg class="a" style="left:325.10px;top:317.34px" width="15.00" height="13.60" viewBox="0 0 15 13.6"><defs><linearGradient id="fg" x1="1" y1="0" x2="0" y2="1"><stop offset="0" stop-color="#b9c7e8"/><stop offset="1" stop-color="#8d9dc6"/></linearGradient></defs><path d="M0.6,13 L0.6,2.4 Q0.6,0.6 2.4,0.6 L5.6,0.6 Q7,0.6 7.4,2.3 L14.4,2.3 L14.4,13 Z" fill="url(#fg)" stroke="#2c3650" stroke-width="1.1"/><path d="M1.3,2.6 Q1.3,1.3 2.6,1.3 L5.4,1.3 Q6.3,1.3 6.7,2.6 Q6.2,3.3 4,3.3 Q1.8,3.3 1.3,2.6Z" fill="#7c8db6"/><path d="M1.6,1.9 Q2.2,1.3 3,1.3 L5.2,1.3 Q5.9,1.4 6.2,2 Z" fill="#c9d4ee"/></svg>
<div class="a txt" style="left:344.00px;top:317.34px;">Public</div>
<div class="a txt" style="left:478.00px;top:317.34px;">Folder</div>
<div class="a txt" style="left:607.00px;top:317.34px;">09/10/2015 01:49:09 AM</div>
<div class="a txt" style="left:741.80px;top:317.34px;">u3p</div>
<div class="a txt" style="left:780.30px;top:317.34px;">u3p</div>
<div class="a txt" style="left:834.70px;top:317.34px;">drwxr-xr-x</div>
<div class="a" style="left:323.2px;top:333.62px;width:583.1px;height:18.18px;background:#ededed"></div>
<div class="a" style="left:476.6px;top:333.62px;width:66.1px;height:18.18px;background:#e3e3e3"></div>
<svg class="a" style="left:325.10px;top:335.52px" width="15.00" height="13.60" viewBox="0 0 15 13.6"><defs><linearGradient id="fg" x1="1" y1="0" x2="0" y2="1"><stop offset="0" stop-color="#b9c7e8"/><stop offset="1" stop-color="#8d9dc6"/></linearGradient></defs><path d="M0.6,13 L0.6,2.4 Q0.6,0.6 2.4,0.6 L5.6,0.6 Q7,0.6 7.4,2.3 L14.4,2.3 L14.4,13 Z" fill="url(#fg)" stroke="#2c3650" stroke-width="1.1"/><path d="M1.3,2.6 Q1.3,1.3 2.6,1.3 L5.4,1.3 Q6.3,1.3 6.7,2.6 Q6.2,3.3 4,3.3 Q1.8,3.3 1.3,2.6Z" fill="#7c8db6"/><path d="M1.6,1.9 Q2.2,1.3 3,1.3 L5.2,1.3 Q5.9,1.4 6.2,2 Z" fill="#c9d4ee"/></svg>
<div class="a txt" style="left:344.00px;top:335.52px;">Templates</div>
<div class="a txt" style="left:478.00px;top:335.52px;">Folder</div>
<div class="a txt" style="left:607.00px;top:335.52px;">09/10/2015 01:49:09 AM</div>
<div class="a txt" style="left:741.80px;top:335.52px;">u3p</div>
<div class="a txt" style="left:780.30px;top:335.52px;">u3p</div>
<div class="a txt" style="left:834.70px;top:335.52px;">drwxr-xr-x</div>
<svg class="a" style="left:325.10px;top:353.70px" width="15.00" height="13.60" viewBox="0 0 15 13.6"><defs><linearGradient id="fg" x1="1" y1="0" x2="0" y2="1"><stop offset="0" stop-color="#b9c7e8"/><stop offset="1" stop-color="#8d9dc6"/></linearGradient></defs><path d="M0.6,13 L0.6,2.4 Q0.6,0.6 2.4,0.6 L5.6,0.6 Q7,0.6 7.4,2.3 L14.4,2.3 L14.4,13 Z" fill="url(#fg)" stroke="#2c3650" stroke-width="1.1"/><path d="M1.3,2.6 Q1.3,1.3 2.6,1.3 L5.4,1.3 Q6.3,1.3 6.7,2.6 Q6.2,3.3 4,3.3 Q1.8,3.3 1.3,2.6Z" fill="#7c8db6"/><path d="M1.6,1.9 Q2.2,1.3 3,1.3 L5.2,1.3 Q5.9,1.4 6.2,2 Z" fill="#c9d4ee"/></svg>
<div class="a txt" style="left:344.00px;top:353.70px;">Videos</div>
<div class="a txt" style="left:478.00px;top:353.70px;">Folder</div>
<div class="a txt" style="left:607.00px;top:353.70px;">09/10/2015 01:49:09 AM</div>
<div class="a txt" style="left:741.80px;top:353.70px;">u3p</div>
<div class="a txt" style="left:780.30px;top:353.70px;">u3p</div>
<div class="a txt" style="left:834.70px;top:353.70px;">drwxr-xr-x</div>
<div class="a" style="left:323.2px;top:369.98px;width:583.1px;height:18.18px;background:#ededed"></div>
<div class="a" style="left:476.6px;top:369.98px;width:66.1px;height:18.18px;background:#e3e3e3"></div>
<svg class="a" style="left:325px;top:371.88px" width="14.2" height="14.2" viewBox="0 0 14.2 14.2"><rect x=".8" y=".8" width="12.4" height="12.4" rx="1.8" fill="#fff" stroke="#242424" stroke-width="1.2"/><path d="M2,13 H12 Q13.2,13 13.2,11.8 V3" fill="none" stroke="#3a3a3a" stroke-width="1.1"/><rect x="2.8" y="3.6" width="8.2" height="6.2" fill="#1e1a18"/><rect x="3.8" y="4.6" width="2.8" height="3" fill="#e8c070"/><rect x="7.2" y="4.6" width="2.8" height="3" fill="#e4b868"/><rect x="3.8" y="7.4" width="2.8" height="1.4" fill="#d83030"/><rect x="7.2" y="7.4" width="2.8" height="1.4" fill="#d02828"/><rect x="3.8" y="4.6" width="1" height="1" fill="#e8e040"/></svg>
<div class="a txt" style="left:342.30px;top:371.88px;">xtermjm.png</div>
<div class="a txt" style="left:425.00px;top:371.88px;">2.2 KB</div>
<div class="a txt" style="left:478.00px;top:371.88px;">PNG Image</div>
<div class="a txt" style="left:544.20px;top:371.88px;">png</div>
<div class="a txt" style="left:607.00px;top:371.88px;">09/05/2015 11:39:12 AM</div>
<div class="a txt" style="left:741.80px;top:371.88px;">u3p</div>
<div class="a txt" style="left:780.30px;top:371.88px;">u3p</div>
<div class="a txt" style="left:834.70px;top:371.88px;">-rw-r--r--</div>
<svg class="a" style="left:42.00px;top:653.40px" width="13" height="12" viewBox="0 0 13 12"><path d="M6.5,.4 Q9.6,.4 9.8,3.6 L12.6,5.2 L12.2,6.6 L10,6.2 L10.4,8.6 L12,10.4 L11.2,11.6 L8.4,10.6 L6.5,11.2 L4.6,10.6 L1.8,11.6 L1,10.4 L2.6,8.6 L3,6.2 L.8,6.6 L.4,5.2 L3.2,3.6 Q3.4,.4 6.5,.4 Z" fill="#2e2e2e"/><circle cx="5.2" cy="3.2" r=".9" fill="#fff"/><circle cx="7.8" cy="3.2" r=".9" fill="#fff"/></svg>
<div class="a txt" style="left:61.60px;top:653.00px;">58.4 KB in root</div>
<svg class="a" style="left:328.00px;top:653.40px" width="13" height="12" viewBox="0 0 13 12"><path d="M6.5,.4 Q9.6,.4 9.8,3.6 L12.6,5.2 L12.2,6.6 L10,6.2 L10.4,8.6 L12,10.4 L11.2,11.6 L8.4,10.6 L6.5,11.2 L4.6,10.6 L1.8,11.6 L1,10.4 L2.6,8.6 L3,6.2 L.8,6.6 L.4,5.2 L3.2,3.6 Q3.4,.4 6.5,.4 Z" fill="#2e2e2e"/><circle cx="5.2" cy="3.2" r=".9" fill="#fff"/><circle cx="7.8" cy="3.2" r=".9" fill="#fff"/></svg>
<svg class="a" style="left:348.6px;top:652.6px" width="14.6" height="13.8" viewBox="0 0 14.6 13.8"><rect x=".6" y=".6" width="13.2" height="12.6" fill="#f0f0f0" stroke="#2a2a2a" stroke-width="1.1"/><rect x="1.4" y="2.6" width="11.6" height="1.4" fill="#555"/><rect x="2.4" y="5" width="3.4" height="5" fill="#6a6a6a"/><rect x="6.6" y="5.4" width="6" height="6.6" rx="1" fill="#c8c8c8" stroke="#777" stroke-width=".8"/></svg>
<svg class="a" style="left:371.6px;top:655.2px" width="12.4" height="9.6" viewBox="0 0 12.4 9.6"><defs><linearGradient id="flg" x1="0" y1="0" x2="1" y2="0"><stop offset="0" stop-color="#fff"/><stop offset="1" stop-color="#5a86d8"/></linearGradient></defs><path d="M.8,.8 H11.6 L7.2,5.2 V8.8 L5.2,7.6 V5.2 Z" fill="url(#flg)" stroke="#141c34" stroke-width="1.1" stroke-linejoin="round"/></svg>
<div class="a txt" style="left:392.40px;top:653.40px;">12 items</div>
<svg class="a" style="left:896px;top:655px" width="16" height="16" viewBox="896 655 16 16"><path d="M897.4,668 L909,656.4 M902.4,668 L909,661.4 M907.3,668 L909,666.3" stroke="#fff" stroke-width="1"/><path d="M898.2,668.8 L909.8,657.2 M903.2,668.8 L909.8,662.2 M908.1,668.8 L909.8,667.1" stroke="#8e8a84" stroke-width="1"/></svg>
</div></body></html>
